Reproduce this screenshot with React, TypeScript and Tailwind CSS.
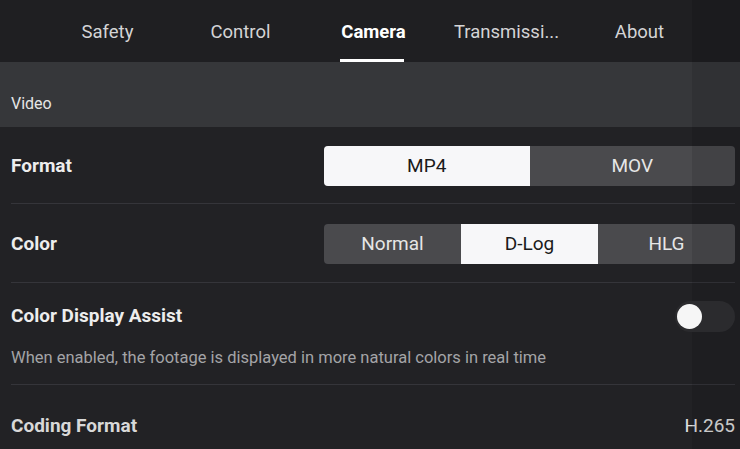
import React, { useState } from 'react';

const tabs = ['Safety', 'Control', 'Camera', 'Transmissi...', 'About'];

interface SegmentProps {
    options: string[];
    value: string;
    onChange: (v: string) => void;
}

const Segment: React.FC<SegmentProps> = ({ options, value, onChange }) => (
    <div className="flex w-[411px] h-[40px] rounded-[4px] overflow-hidden bg-[#4a4a4d]">
        {options.map((o) => (
            <button
                key={o}
                onClick={() => onChange(o)}
                className={
                    o === value
                        ? 'flex-1 bg-[#f7f7f9] text-[#1a1a1a] text-[19px]'
                        : 'flex-1 text-[#e6e6e6] text-[19px]'
                }
            >
                {o}
            </button>
        ))}
    </div>
);

export default function App() {
    const [format, setFormat] = useState('MP4');
    const [color, setColor] = useState('D-Log');
    const [assist, setAssist] = useState(false);

    return (
        <div className="relative w-[740px] h-[449px] overflow-hidden bg-[#222225] font-['Roboto',sans-serif]">
            <div className="flex h-[62px] bg-[#1f1f22] pl-[41px]">
                {tabs.map((t) => (
                    <div
                        key={t}
                        className={
                            t === 'Camera'
                                ? 'relative w-[133px] shrink-0 flex items-center justify-center pt-[3px] text-[18.5px] font-bold text-white'
                                : 'relative w-[133px] shrink-0 flex items-center justify-center pt-[3px] text-[18.5px] text-[#d4d4d6]'
                        }
                    >
                        {t}
                        {t === 'Camera' && (
                            <div className="absolute bottom-0 left-[33px] w-[64px] h-[3px] bg-white" />
                        )}
                    </div>
                ))}
            </div>

            <div className="h-[65px] bg-[#36373a] flex items-end pb-[11px] pl-[11px]">
                <span className="text-[16px] text-[#e6e6e6]">Video</span>
            </div>

            <div className="pl-[11px] pr-[5px]">
                <div className="flex items-center justify-between h-[77px] pt-[2px] border-b border-[#35353a]">
                    <span className="text-[19px] font-bold text-[#ededed]">Format</span>
                    <Segment options={['MP4', 'MOV']} value={format} onChange={setFormat} />
                </div>
                <div className="flex items-center justify-between h-[79px] pt-[2px] border-b border-[#35353a]">
                    <span className="text-[19px] font-bold text-[#ededed]">Color</span>
                    <Segment options={['Normal', 'D-Log', 'HLG']} value={color} onChange={setColor} />
                </div>
                <div className="h-[102px] border-b border-[#35353a] pt-[17px]">
                    <div className="flex items-center justify-between h-[32px]">
                        <span className="text-[19px] font-bold text-[#ededed]">Color Display Assist</span>
                        <button
                            onClick={() => setAssist(!assist)}
                            className={
                                assist
                                    ? 'relative z-10 w-[60px] h-[31px] rounded-full bg-[#3a7bd5] flex items-center justify-end px-[2px]'
                                    : 'relative z-10 w-[60px] h-[31px] rounded-full bg-[#2b2b2e] flex items-center px-[2px]'
                            }
                        >
                            <span className="block w-[25px] h-[25px] rounded-full bg-[#f6f6f6]" />
                        </button>
                    </div>
                    <p className="mt-[14px] text-[16.5px] text-[#a4a4a7]">
                        When enabled, the footage is displayed in more natural colors in real time
                    </p>
                </div>
                <div className="flex items-center justify-between h-[80px] pt-[2px]">
                    <span className="text-[19px] font-bold text-[#d8d8d8]">Coding Format</span>
                    <span className="text-[19px] text-[#e0e0e0]">H.265</span>
                </div>
            </div>

            <div className="absolute top-0 right-0 w-[48px] h-full bg-black/10 pointer-events-none" />
        </div>
    );
}
